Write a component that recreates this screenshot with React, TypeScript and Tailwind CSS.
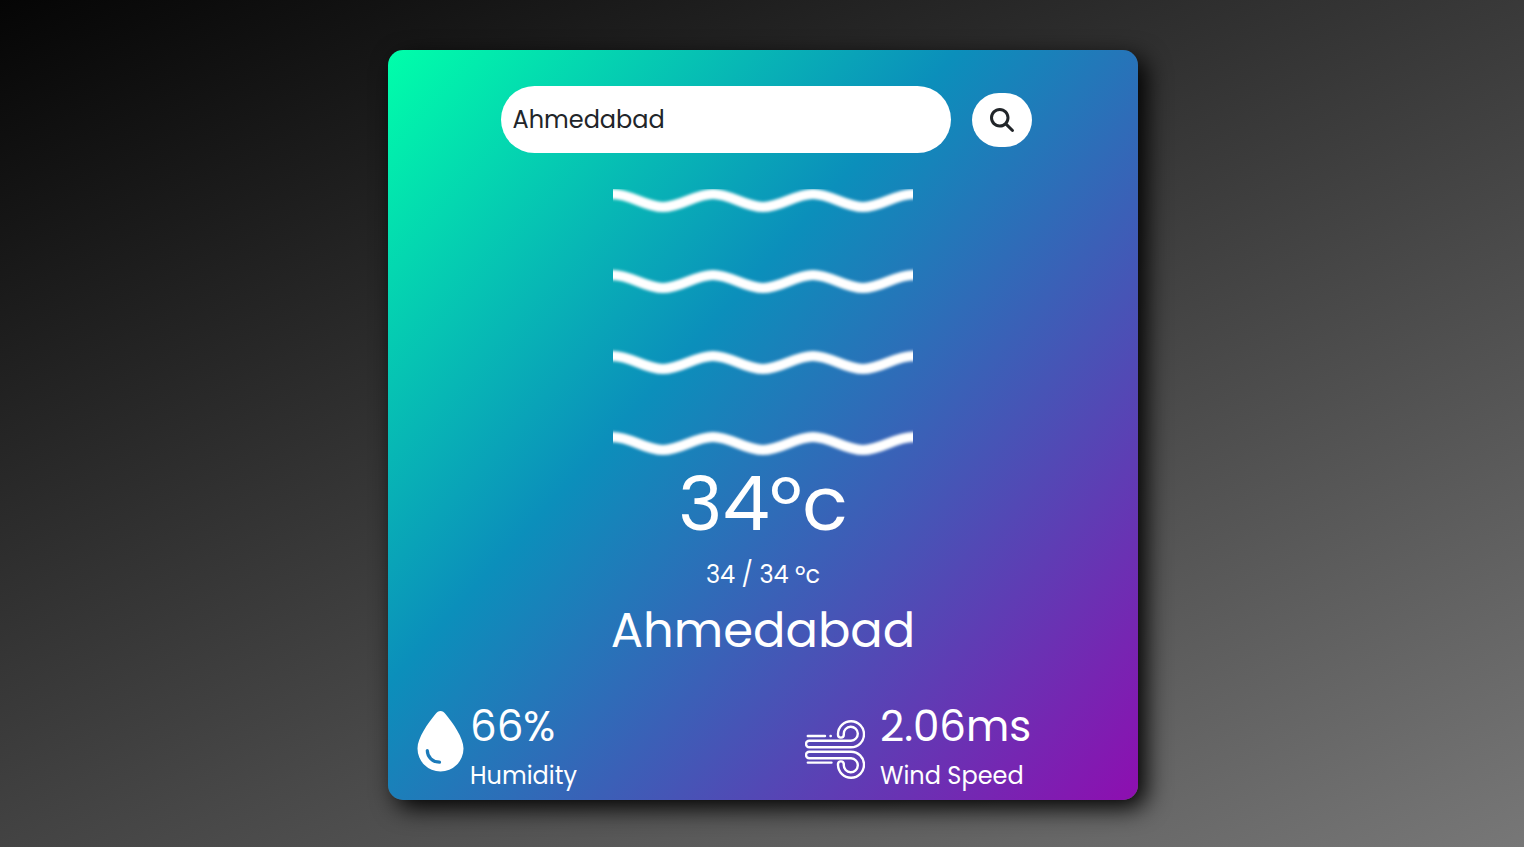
import { useState } from "react";
import { FaMagnifyingGlass } from "react-icons/fa6";

function wavePath(y: number) {
  const low = y + 13;
  let d = `M-50 ${low}`;
  for (let x = -50; x < 350; x += 100) {
    d += ` C${x + 18} ${low} ${x + 32} ${y} ${x + 50} ${y}`;
    d += ` C${x + 68} ${y} ${x + 82} ${low} ${x + 100} ${low}`;
  }
  return d;
}

function MistIcon() {
  return (
    <svg viewBox="0 0 300 276" className="block h-[276px] w-[300px]" role="img" aria-label="Mist">
      <filter id="soften" filterUnits="userSpaceOnUse" x="-20" y="-20" width="340" height="320">
        <feGaussianBlur stdDeviation="1.5" />
      </filter>
      <g fill="none" stroke="#fff" strokeWidth="10" filter="url(#soften)">
        {[5, 86, 167, 248].map((y) => (
          <path key={y} d={wavePath(y)} />
        ))}
      </g>
    </svg>
  );
}

function DropIcon() {
  return (
    <svg viewBox="0 0 47 61" className="mb-[18px] h-[61px] w-[47px] shrink-0" aria-hidden="true">
      <path
        fill="#fff"
        d="M23.500 0c2 0 3.500 1 5 3C36 12 46.500 27 46.500 37.500a23 23 0 0 1-46 0C.5 27 11 12 18.500 3c1.500-2 3-3 5-3Z"
      />
      <path d="M10.300 39.500c0 6.500 5.500 11.700 12.200 11.700" fill="none" stroke="#1b7ab9" strokeWidth="3.200" strokeLinecap="round" />
    </svg>
  );
}

function WindIcon() {
  const curl =
    "M46 27.300H4.300a3.300 3.300 0 0 1 0-6.600H46a7 7 0 1 0-7.200-6.700v.7a2.900 2.900 0 0 1-5.800 0V14a13 13 0 1 1 13 13.300Z";
  return (
    <svg viewBox="0 0 60 59" className="mb-0.5 h-[59px] w-[60px] shrink-0" aria-hidden="true">
      <g fill="none" stroke="#fff" strokeWidth="2.400" strokeLinecap="round" strokeLinejoin="round">
        <path d={curl} />
        <path d={curl} transform="matrix(1 0 0 -1 0 59)" />
        <path d="M2.800 16H20M25.500 16h.3M2.800 42.600H26.500" />
      </g>
    </svg>
  );
}

export default function App() {
  const [city, setCity] = useState("Ahmedabad");

  return (
    <div className="min-h-screen bg-[linear-gradient(155deg,#050505,#777)] pt-[50px] pb-[47px] pl-0.5 font-['Poppins','Inter',sans-serif] text-white">
      <main className="mx-auto max-w-[750px] rounded-[15px] bg-[linear-gradient(132deg,#00ffaa,#0b8fbb_40%,#8e0eb0)] pt-9 shadow-[8px_8px_25px_#000]">
        <form className="flex items-center justify-center gap-[21px] pl-1.5" onSubmit={(e) => e.preventDefault()}>
          <input
            type="text"
            aria-label="City"
            value={city}
            onChange={(e) => setCity(e.target.value)}
            className="h-[67px] w-[450px] min-w-0 rounded-full bg-white px-3 text-2xl text-[#212529] outline-none"
          />
          <button
            type="submit"
            aria-label="Search"
            className="flex h-[54px] w-[60px] shrink-0 items-center justify-center rounded-full bg-white text-[#212529]"
          >
            <FaMagnifyingGlass className="size-6" />
          </button>
        </form>

        <section className="flex flex-col items-center pt-9">
          <MistIcon />
          <h1 className="text-[75px] leading-[78px]">34ºc</h1>
          <p className="pt-3.5 text-2xl leading-9">34 / 34 ºc</p>
          <h2 className="pt-2 text-[48px] leading-[60px]">Ahmedabad</h2>
        </section>

        <section className="grid grid-cols-2 pt-10 pb-px">
          <div className="flex items-center gap-1.5 pl-[29px]">
            <DropIcon />
            <div>
              <p className="text-[42px] leading-[52px]">66%</p>
              <p className="text-2xl leading-[46px]">Humidity</p>
            </div>
          </div>
          <div className="flex items-center gap-[15px] pl-[42px]">
            <WindIcon />
            <div>
              <p className="text-[42px] leading-[52px]">2.06ms</p>
              <p className="text-2xl leading-[46px]">Wind Speed</p>
            </div>
          </div>
        </section>
      </main>
    </div>
  );
}
